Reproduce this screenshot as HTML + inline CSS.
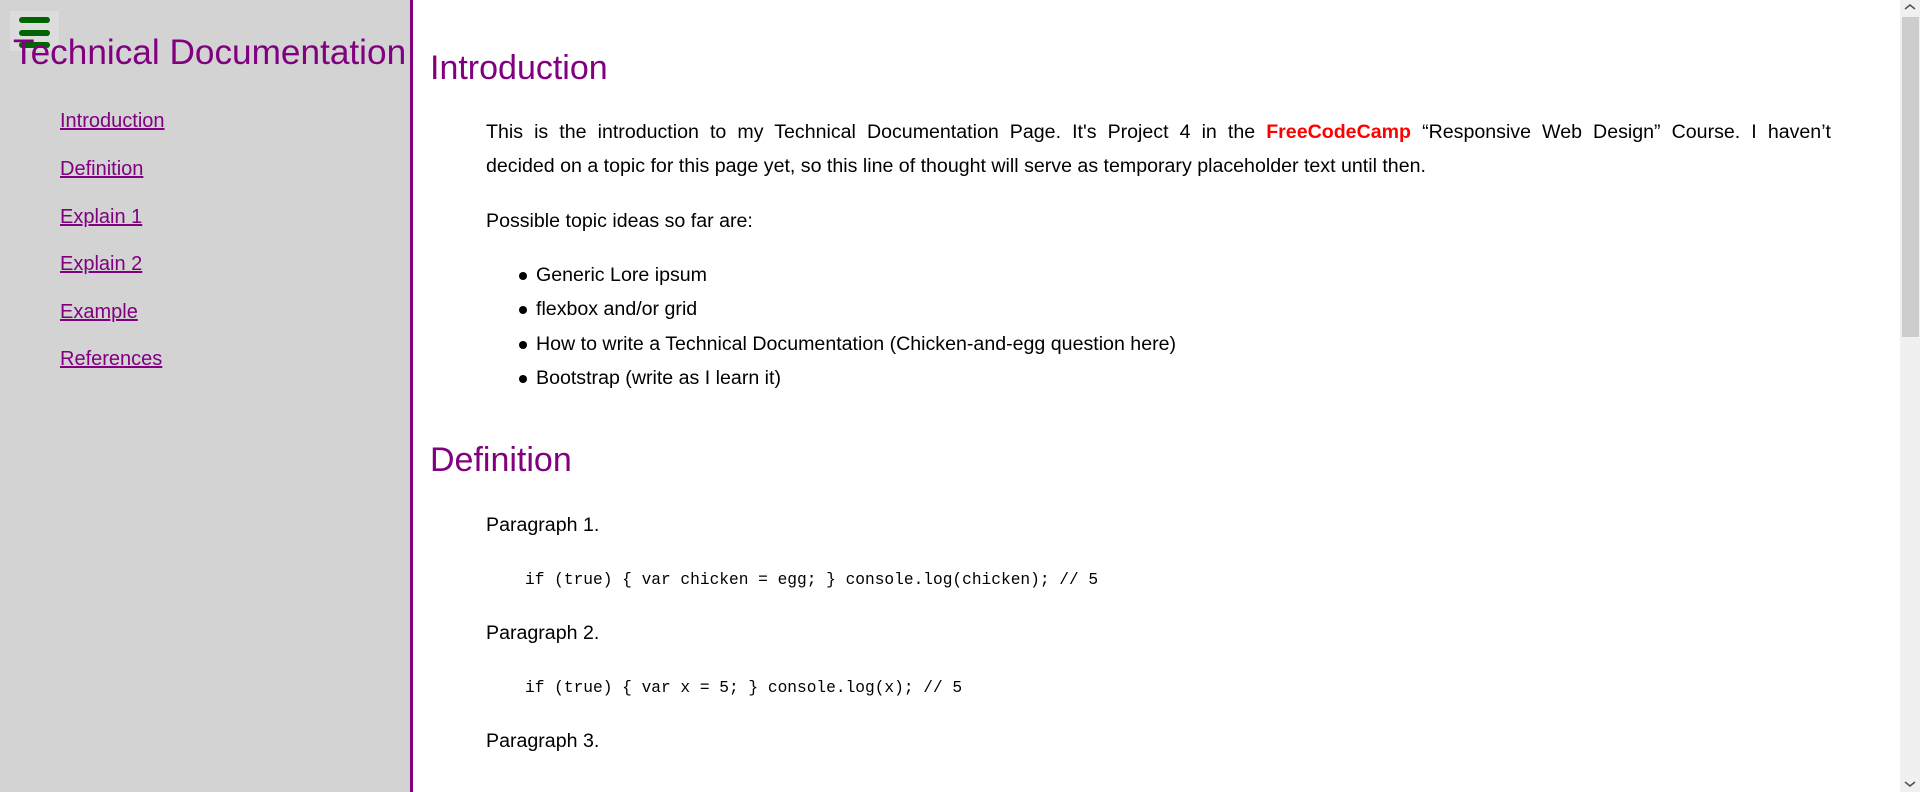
<!DOCTYPE html>
<html><head><meta charset="utf-8"><style>
*{margin:0;padding:0;box-sizing:border-box}
body{width:1920px;height:792px;overflow:hidden;background:#fff;font-family:"Liberation Sans",sans-serif;color:#000;position:relative}
#side{position:absolute;left:0;top:0;width:413px;height:792px;background:#d3d3d3;border-right:3px solid #800080}
#ham{position:absolute;left:10px;top:11px;width:49px;height:40px;background:#dcdcdc}
#ham i{position:absolute;left:9px;width:31px;height:6px;background:#006400;border-radius:3px}
#title{position:absolute;left:13px;top:31px;font-size:35.2px;color:#800080;white-space:nowrap;line-height:44px}
.nav{position:absolute;left:60px;font-size:20px;color:#800080;text-decoration:underline;line-height:24px}
h2{position:absolute;left:430px;font-size:34px;font-weight:normal;color:#800080;line-height:40px;white-space:nowrap}
.p{position:absolute;left:486px;font-size:19.6px;line-height:24px;white-space:nowrap}
.j{width:1345px;text-align:justify;text-align-last:justify;white-space:normal}
.li{position:absolute;left:536px;font-size:19.6px;line-height:24px;white-space:nowrap}
.li:before{content:"";position:absolute;left:-17px;top:9px;width:8px;height:8px;border-radius:50%;background:#000}
.code{position:absolute;left:525px;font-family:"Liberation Mono",monospace;font-size:16.2px;line-height:20px;white-space:pre}
#sb{position:absolute;left:1900px;top:0;width:20px;height:792px;background:#f0f0f0}
#th{position:absolute;left:1902px;top:17px;width:17px;height:320px;background:#cdcdcd}
</style></head><body>
<div id="side">
<div id="ham"><i style="top:6px"></i><i style="top:19px"></i><i style="top:31px"></i></div>
<div id="title">Technical Documentation</div>
<div class="nav" style="top:109px">Introduction</div>
<div class="nav" style="top:157px">Definition</div>
<div class="nav" style="top:205px">Explain 1</div>
<div class="nav" style="top:252px">Explain 2</div>
<div class="nav" style="top:300px">Example</div>
<div class="nav" style="top:347px">References</div>
</div>
<h2 style="top:48px">Introduction</h2>
<div class="p j" style="top:120px">This is the introduction to my Technical Documentation Page. It's Project 4 in the <b style="color:#f00">FreeCodeCamp</b> “Responsive Web Design” Course. I haven’t</div>
<div class="p" style="top:154px">decided on a topic for this page yet, so this line of thought will serve as temporary placeholder text until then.</div>
<div class="p" style="top:209px">Possible topic ideas so far are:</div>
<div class="li" style="top:263px">Generic Lore ipsum</div>
<div class="li" style="top:297px">flexbox and/or grid</div>
<div class="li" style="top:332px">How to write a Technical Documentation (Chicken-and-egg question here)</div>
<div class="li" style="top:366px">Bootstrap (write as I learn it)</div>
<h2 style="top:440px">Definition</h2>
<div class="p" style="top:513px">Paragraph 1.</div>
<div class="code" style="top:570px">if (true) { var chicken = egg; } console.log(chicken); // 5</div>
<div class="p" style="top:621px">Paragraph 2.</div>
<div class="code" style="top:678px">if (true) { var x = 5; } console.log(x); // 5</div>
<div class="p" style="top:729px">Paragraph 3.</div>
<div id="sb"></div><div id="th"></div>
<svg style="position:absolute;left:1904px;top:3px" width="12" height="8"><path d="M1 6L6 2L11 6" stroke="#505050" stroke-width="1.5" fill="none"/></svg>
<svg style="position:absolute;left:1904px;top:780px" width="12" height="8"><path d="M1 2L6 6L11 2" stroke="#505050" stroke-width="1.5" fill="none"/></svg>
</body></html>
